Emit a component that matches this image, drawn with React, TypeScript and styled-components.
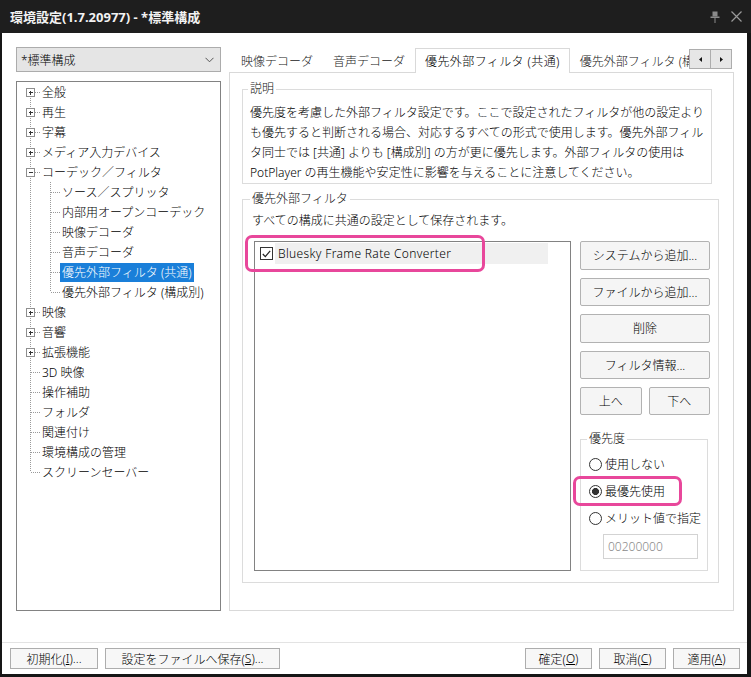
import React from 'react';
import styled, { createGlobalStyle } from 'styled-components';

const GlobalStyle = createGlobalStyle`
  html, body {
    margin: 0;
    padding: 0;
    background: #161616;
  }
  body {
    font-family: "Noto Sans", "Noto Sans CJK JP", sans-serif;
    font-size: 12px;
    font-weight: 300;
    color: #000;
  }
  * { box-sizing: border-box; }
`;

const Window = styled.div`
  width: 751px;
  height: 677px;
  background: #161616;
  display: flex;
  flex-direction: column;
`;

const TitleBar = styled.div`
  height: 33px;
  flex: none;
  display: flex;
  align-items: center;
  padding: 0 9px 0 10px;
  background: #1e1e1e;
`;

const TitleText = styled.div`
  flex: 1;
  color: #f2f2f2;
  font-size: 13px;
  font-weight: 700;
  white-space: nowrap;
`;

const TitleIcons = styled.div`
  display: flex;
  align-items: center;
  gap: 11px;
  svg { display: block; }
`;

const Body = styled.div`
  flex: 1;
  margin: 0 4px 3px 2px;
  background: #fff;
  display: flex;
  flex-direction: column;
`;

const Main = styled.div`
  display: flex;
  gap: 8px;
  padding: 14px 13px 0 14px;
  height: 578px;
`;

const LeftColumn = styled.div`
  width: 205px;
  flex: none;
  display: flex;
  flex-direction: column;
  gap: 9px;
`;

const Combo = styled.div`
  height: 25px;
  display: flex;
  align-items: center;
  justify-content: space-between;
  padding: 0 6px 0 4px;
  background: #e5e5e5;
  border: 1px solid #acacac;
  svg { display: block; }
`;

const Tree = styled.div`
  flex: 1;
  border: 1px solid #828282;
  padding: 0 0 0 3px;
`;

const TreeRow = styled.div`
  height: 20px;
  display: flex;
  align-items: center;
  white-space: nowrap;
`;

const GuideSvg = styled.svg`
  display: block;
  flex: none;
  line {
    stroke: #9a9a9a;
    stroke-width: 1;
    stroke-dasharray: 1 1;
    shape-rendering: crispEdges;
  }
  rect {
    fill: #fff;
    stroke: #8e8e8e;
    shape-rendering: crispEdges;
  }
  path {
    stroke: #333;
    fill: none;
    shape-rendering: crispEdges;
  }
`;

const TreeLabel = styled.span<{ $selected?: boolean }>`
  display: inline-block;
  height: 19px;
  line-height: 19px;
  padding: 0 2px;
  margin-top: 1px;
  background: ${p => (p.$selected ? '#1a7fd9' : 'transparent')};
  color: ${p => (p.$selected ? '#fff' : '#000')};
`;

const RightColumn = styled.div`
  flex: 1;
  display: flex;
  flex-direction: column;
  min-width: 0;
`;

const TabStrip = styled.div`
  height: 26px;
  flex: none;
  display: flex;
`;

const TabList = styled.div`
  flex: 1;
  display: flex;
  align-items: flex-end;
  overflow: hidden;
  padding-left: 2px;
`;

const Tab = styled.div<{ $active?: boolean }>`
  flex: none;
  height: 25px;
  display: flex;
  align-items: center;
  padding: 0 9px;
  white-space: nowrap;
  letter-spacing: ${p => (p.$active ? '0.4px' : '0')};
  border: 1px solid ${p => (p.$active ? '#d9d9d9' : 'transparent')};
  border-bottom: none;
  background: ${p => (p.$active ? '#fff' : 'transparent')};
  color: ${p => (p.$active ? '#000' : '#222')};
  position: relative;
  z-index: ${p => (p.$active ? 1 : 0)};
`;

const ScrollButtons = styled.div`
  display: flex;
  margin: 2px 2px 0 0;
  align-self: flex-start;
`;

const ScrollButton = styled.div`
  width: 22px;
  height: 20px;
  display: flex;
  align-items: center;
  justify-content: center;
  background: #e6e6e6;
  border: 1px solid #adadad;
  & + & { margin-left: -1px; }
  svg { display: block; }
`;

const Panel = styled.div`
  flex: 1;
  margin-top: -1px;
  border: 1px solid #d9d9d9;
  padding: 9px 14px 0 12px;
  display: flex;
  flex-direction: column;
  gap: 8px;
`;

const Group = styled.fieldset<{ $padding: string; $mr?: number }>`
  margin: 0 ${p => p.$mr ?? 0}px 0 0;
  padding: ${p => p.$padding};
  border: 1px solid #dcdcdc;
  min-width: 0;
`;

const Legend = styled.legend`
  font-size: 12px;
  line-height: 14px;
  padding: 0 2px;
  margin-left: -2px;
  color: #111;
`;

const Description = styled.p`
  margin: 0;
  line-height: 20px;
  white-space: nowrap;
`;

const Note = styled.div`
  line-height: 20px;
  white-space: nowrap;
`;

const FilterRow = styled.div`
  display: flex;
  gap: 9px;
  margin-top: 10px;
`;

const ListBox = styled.div`
  width: 317px;
  height: 330px;
  margin-left: 2px;
  flex: none;
  border: 1px solid #828282;
  padding: 1px 0 0 1px;
`;

const ListItem = styled.div`
  position: relative;
  height: 21px;
  display: flex;
  align-items: center;
  padding-left: 4px;
`;

const CheckBox = styled.span`
  width: 13px;
  height: 13px;
  flex: none;
  border: 1px solid #333;
  background: #fff;
  display: flex;
  align-items: center;
  justify-content: center;
  svg { display: block; }
`;

const ItemLabel = styled.span`
  margin-left: 2px;
  width: 273px;
  height: 21px;
  line-height: 21px;
  padding-left: 3px;
  background: #f0f0f0;
  white-space: nowrap;
  letter-spacing: 0.35px;
`;

const Highlight = styled.span`
  position: absolute;
  border: 3px solid #e8479b;
  border-radius: 7px;
  pointer-events: none;
`;

const ButtonColumn = styled.div`
  width: 130px;
  flex: none;
  display: flex;
  flex-direction: column;
  gap: 8px;
`;

const ButtonPair = styled.div`
  display: flex;
  gap: 7px;
`;

const SideButton = styled.div`
  flex: 1;
  height: 28px;
  display: flex;
  align-items: center;
  justify-content: center;
  background: #f5f5f5;
  border: 1px solid #b2b2b2;
  border-radius: 2px;
  white-space: nowrap;
`;

const PriorityGroup = styled(Group)`
  margin: 9px 2px 0 0;
`;

const RadioRow = styled.div`
  position: relative;
  height: 20px;
  display: flex;
  align-items: center;
  gap: 3px;
  white-space: nowrap;
  & + & { margin-top: 7px; }
`;

const Radio = styled.span<{ $checked?: boolean }>`
  width: 13px;
  height: 13px;
  flex: none;
  border-radius: 50%;
  border: 1px solid #333;
  background: ${p =>
    p.$checked ? 'radial-gradient(circle, #333 0 3.2px, #fff 3.8px)' : '#fff'};
`;

const MeritInput = styled.div`
  width: 95px;
  height: 25px;
  margin: 6px 0 0 14px;
  border: 1px solid #d3d3d3;
  padding-left: 4px;
  display: flex;
  align-items: center;
  color: #8a8a8a;
`;

const Footer = styled.div`
  margin-top: auto;
  border-top: 1px solid #e3e3e3;
  padding: 5px 7px 5px 8px;
  display: flex;
  gap: 7px;
`;

const Spacer = styled.div`
  flex: 1;
`;

const DialogButton = styled.div<{ $width: number }>`
  width: ${p => p.$width}px;
  height: 21px;
  display: flex;
  align-items: center;
  justify-content: center;
  background: #f7f7f7;
  border: 1px solid #adadad;
  white-space: nowrap;
`;

const Key = styled.span`
  text-decoration: underline;
`;

interface TreeItem {
  label: string;
  depth: 0 | 1;
  box?: '+' | '-';
  selected?: boolean;
  last?: boolean;
}

const treeItems: TreeItem[] = [
  { label: '全般', depth: 0, box: '+' },
  { label: '再生', depth: 0, box: '+' },
  { label: '字幕', depth: 0, box: '+' },
  { label: 'メディア入力デバイス', depth: 0, box: '+' },
  { label: 'コーデック／フィルタ', depth: 0, box: '-' },
  { label: 'ソース／スプリッタ', depth: 1 },
  { label: '内部用オープンコーデック', depth: 1 },
  { label: '映像デコーダ', depth: 1 },
  { label: '音声デコーダ', depth: 1 },
  { label: '優先外部フィルタ (共通)', depth: 1, selected: true },
  { label: '優先外部フィルタ (構成別)', depth: 1, last: true },
  { label: '映像', depth: 0, box: '+' },
  { label: '音響', depth: 0, box: '+' },
  { label: '拡張機能', depth: 0, box: '+' },
  { label: '3D 映像', depth: 0 },
  { label: '操作補助', depth: 0 },
  { label: 'フォルダ', depth: 0 },
  { label: '関連付け', depth: 0 },
  { label: '環境構成の管理', depth: 0 },
  { label: 'スクリーンセーバー', depth: 0, last: true },
];

function TreeGuide({ item, first }: { item: TreeItem; first: boolean }) {
  const w = 20 * (item.depth + 1);
  const stubX = item.depth * 20 + 10;
  return (
    <GuideSvg width={w} height={20}>
      {item.depth === 0 ? (
        <line x1={10.5} y1={first ? 10 : 0} x2={10.5} y2={item.last ? 10 : 20} />
      ) : (
        <>
          <line x1={10.5} y1={0} x2={10.5} y2={20} />
          <line x1={30.5} y1={0} x2={30.5} y2={item.last ? 10 : 20} />
        </>
      )}
      <line x1={stubX + 1} y1={10.5} x2={w} y2={10.5} />
      {item.box && (
        <>
          <rect x={6.5} y={6.5} width={8} height={8} />
          <path d={item.box === '+' ? 'M8.5 10.5h4M10.5 8.5v4' : 'M8.5 10.5h4'} />
        </>
      )}
    </GuideSvg>
  );
}

function PinIcon() {
  return (
    <svg width="10" height="12" viewBox="0 0 10 12">
      <rect x="2.5" y="0.5" width="5" height="5" fill="#8a8a8a" />
      <rect x="0.5" y="5.5" width="9" height="1.5" fill="#8a8a8a" />
      <rect x="4.5" y="7" width="1" height="5" fill="#8a8a8a" />
    </svg>
  );
}

function CloseIcon() {
  return (
    <svg width="11" height="11" viewBox="0 0 11 11">
      <path d="M0.5 0.5L10.5 10.5M10.5 0.5L0.5 10.5" stroke="#9a9a9a" strokeWidth="1.2" />
    </svg>
  );
}

function App() {
  return (
    <Window>
      <GlobalStyle />
      <TitleBar>
        <TitleText>環境設定(1.7.20977) - *標準構成</TitleText>
        <TitleIcons>
          <PinIcon />
          <CloseIcon />
        </TitleIcons>
      </TitleBar>
      <Body>
        <Main>
          <LeftColumn>
            <Combo>
              <span>*標準構成</span>
              <svg width="9" height="6" viewBox="0 0 9 6">
                <path d="M0.5 0.8L4.5 4.8L8.5 0.8" stroke="#555" fill="none" />
              </svg>
            </Combo>
            <Tree>
              {treeItems.map((item, i) => (
                <TreeRow key={item.label}>
                  <TreeGuide item={item} first={i === 0} />
                  <TreeLabel $selected={item.selected}>{item.label}</TreeLabel>
                </TreeRow>
              ))}
            </Tree>
          </LeftColumn>
          <RightColumn>
            <TabStrip>
              <TabList>
                <Tab>映像デコーダ</Tab>
                <Tab>音声デコーダ</Tab>
                <Tab $active>優先外部フィルタ (共通)</Tab>
                <Tab>優先外部フィルタ (構成別)</Tab>
              </TabList>
              <ScrollButtons>
                <ScrollButton>
                  <svg width="3" height="5" viewBox="0 0 3 5"><path d="M3 0L0 2.5L3 5Z" fill="#111" /></svg>
                </ScrollButton>
                <ScrollButton>
                  <svg width="3" height="5" viewBox="0 0 3 5"><path d="M0 0L3 2.5L0 5Z" fill="#111" /></svg>
                </ScrollButton>
              </ScrollButtons>
            </TabStrip>
            <Panel>
              <Group $padding="7px 7px 0 7px" $mr={7}>
                <Legend>説明</Legend>
                <Description>
                  優先度を考慮した外部フィルタ設定です。ここで設定されたフィルタが他の設定より<br />
                  も優先すると判断される場合、対応するすべての形式で使用します。優先外部フィル<br />
                  タ同士では [共通] よりも [構成別] の方が更に優先します。外部フィルタの使用は<br />
                  PotPlayer の再生機能や安定性に影響を与えることに注意してください。
                </Description>
              </Group>
              <Group $padding="5px 8px 11px 9px">
                <Legend>優先外部フィルタ</Legend>
                <Note>すべての構成に共通の設定として保存されます。</Note>
                <FilterRow>
                  <ListBox>
                    <ListItem>
                      <CheckBox>
                        <svg width="9" height="8" viewBox="0 0 9 8">
                          <path d="M0.8 4L3.3 6.6L8.2 0.8" stroke="#222" strokeWidth="1.2" fill="none" />
                        </svg>
                      </CheckBox>
                      <ItemLabel>Bluesky Frame Rate Converter</ItemLabel>
                      <Highlight style={{ left: -11, top: -8, width: 240, height: 37 }} />
                    </ListItem>
                  </ListBox>
                  <ButtonColumn>
                    <SideButton>システムから追加...</SideButton>
                    <SideButton>ファイルから追加...</SideButton>
                    <SideButton>削除</SideButton>
                    <SideButton>フィルタ情報...</SideButton>
                    <ButtonPair>
                      <SideButton>上へ</SideButton>
                      <SideButton>下へ</SideButton>
                    </ButtonPair>
                    <PriorityGroup $padding="8px 6px 11px 8px">
                      <Legend>優先度</Legend>
                      <RadioRow>
                        <Radio />
                        使用しない
                      </RadioRow>
                      <RadioRow>
                        <Radio $checked />
                        最優先使用
                        <Highlight style={{ left: -16, top: -5, width: 109, height: 30 }} />
                      </RadioRow>
                      <RadioRow>
                        <Radio />
                        メリット値で指定
                      </RadioRow>
                      <MeritInput>00200000</MeritInput>
                    </PriorityGroup>
                  </ButtonColumn>
                </FilterRow>
              </Group>
            </Panel>
          </RightColumn>
        </Main>
        <Footer>
          <DialogButton $width={88}>初期化(<Key>I</Key>)...</DialogButton>
          <DialogButton $width={175}>設定をファイルへ保存(<Key>S</Key>)...</DialogButton>
          <Spacer />
          <DialogButton $width={67}>確定(<Key>O</Key>)</DialogButton>
          <DialogButton $width={67}>取消(<Key>C</Key>)</DialogButton>
          <DialogButton $width={67}>適用(<Key>A</Key>)</DialogButton>
        </Footer>
      </Body>
    </Window>
  );
}

export default App;
